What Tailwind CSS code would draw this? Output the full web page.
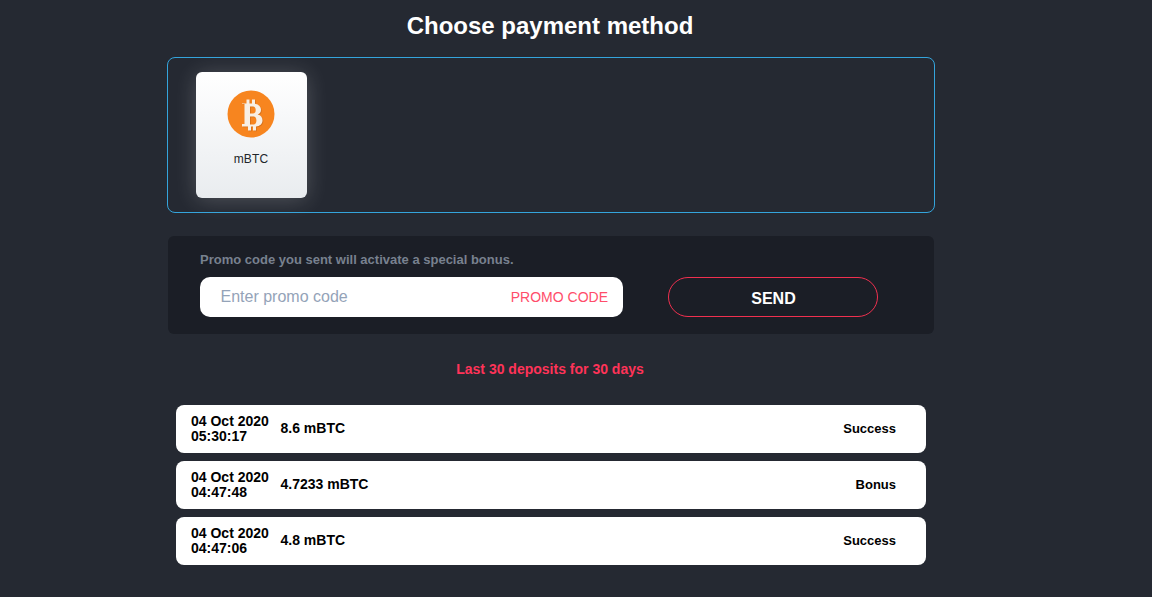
<!DOCTYPE html>
<html lang="en">

<head>
    <meta charset="UTF-8">
    <meta name="viewport" content="width=device-width, initial-scale=1.0">
    <title>Choose payment method</title>
    <script src="https://cdn.jsdelivr.net/npm/@tailwindcss/browser@4"></script>
</head>

<body class="bg-[#252932] h-[597px] overflow-hidden font-['Liberation_Sans',Arial,sans-serif]">
    <div class="ml-[167px] w-[768px]">
        <h1 class="h-[57px] pt-[10px] pr-[2px] text-center text-white text-2xl font-bold leading-[32px]">Choose payment method</h1>

        <!-- payment methods -->
        <div class="h-[156px] border border-[#34a4dc] rounded-lg pl-[28px] pt-[14px]">
            <div class="w-[111px] h-[126px] rounded-md bg-gradient-to-b from-white to-[#e9ecef] shadow-[0_2px_22px_rgba(255,255,255,0.2)] flex flex-col items-center pt-[18px]">
                <svg class="w-12 h-12 -ml-px" viewBox="0 0 48 48">
                    <circle cx="24" cy="24" r="23.5" fill="#f7851f" />
                    <path fill="#b9601a" fill-opacity="0.55" fill-rule="evenodd" transform="translate(0.8 0.8)" d="M15 13.5h4.5v-4h3v4h2.5v-4h3v4.3c4 .7 6 3 6 6 0 2.5-1.3 4-3.3 4.7 3 .8 4.8 2.8 4.8 5.8 0 3.6-2.7 6-6.5 6.2v4h-3v-4H24v4h-3v-4h-6v-2.5h2.500v-21h-2.500zM23 16.500v7h3c1.800 0 2.700-1.300 2.700-3.500 0-2.200-1-3.500-2.700-3.500zM23 26.500v8h3.200c2 0 3.200-1.500 3.200-4 0-2.500-1.200-4-3.200-4z" />
                    <path fill="#f8efe4" fill-rule="evenodd" d="M15 13.5h4.5v-4h3v4h2.500v-4h3v4.300c4 .7 6 3 6 6 0 2.500-1.300 4-3.300 4.700 3 .8 4.800 2.800 4.800 5.800 0 3.600-2.700 6-6.500 6.200v4h-3v-4H24v4h-3v-4h-6v-2.500h2.500v-21H15zM23 16.500v7h3c1.800 0 2.700-1.300 2.700-3.500 0-2.200-1-3.500-2.700-3.500zM23 26.500v8h3.200c2 0 3.200-1.500 3.200-4 0-2.500-1.200-4-3.200-4z" />
                </svg>
                <span class="mt-[13px] -ml-px text-xs leading-[16px] tracking-[0.15px] text-[#212529]">mBTC</span>
            </div>
        </div>

        <!-- promo code -->
        <div class="mt-[23px] ml-px w-[766px] h-[98px] bg-[#1b1e26] rounded-md pl-[32px] pt-[15px]">
            <p class="text-[13px] font-bold leading-[18px] text-[#78818f]">Promo code you sent will activate a special bonus.</p>
            <div class="mt-[8px] flex items-center">
                <div class="w-[423px] h-10 bg-white rounded-[10px] flex items-center justify-between pl-[20.5px] pr-[15px]">
                    <input type="text" placeholder="Enter promo code" class="w-[200px] outline-none text-base placeholder:text-[#94a3b8]">
                    <span class="text-sm text-[#ff4d6a]">PROMO CODE</span>
                </div>
                <button class="ml-[45px] w-[210px] h-10 pt-1 pl-px rounded-[20px] border border-[#f0304f] text-white font-bold text-base">SEND</button>
            </div>
        </div>

        <p class="mt-[26px] pr-[2px] text-center text-[#ff3358] text-sm font-bold leading-[18px]">Last 30 deposits for 30 days</p>

        <!-- deposits -->
        <div class="mt-[27px] ml-[9px] w-[750px] flex flex-col gap-2">
            <div class="h-12 bg-white rounded-lg flex items-center pl-[15px] pr-[30px] text-black font-bold">
                <div class="w-[89.5px] text-sm leading-[15px]">04 Oct 2020<br>05:30:17</div>
                <div class="flex-1 text-sm leading-[18px] -mt-[2px]">8.6 mBTC</div>
                <div class="text-[13px]">Success</div>
            </div>
            <div class="h-12 bg-white rounded-lg flex items-center pl-[15px] pr-[30px] text-black font-bold">
                <div class="w-[89.5px] text-sm leading-[15px]">04 Oct 2020<br>04:47:48</div>
                <div class="flex-1 text-sm leading-[18px] -mt-[2px]">4.7233 mBTC</div>
                <div class="text-[13px]">Bonus</div>
            </div>
            <div class="h-12 bg-white rounded-lg flex items-center pl-[15px] pr-[30px] text-black font-bold">
                <div class="w-[89.5px] text-sm leading-[15px]">04 Oct 2020<br>04:47:06</div>
                <div class="flex-1 text-sm leading-[18px] -mt-[2px]">4.8 mBTC</div>
                <div class="text-[13px]">Success</div>
            </div>
        </div>
    </div>
</body>

</html>
